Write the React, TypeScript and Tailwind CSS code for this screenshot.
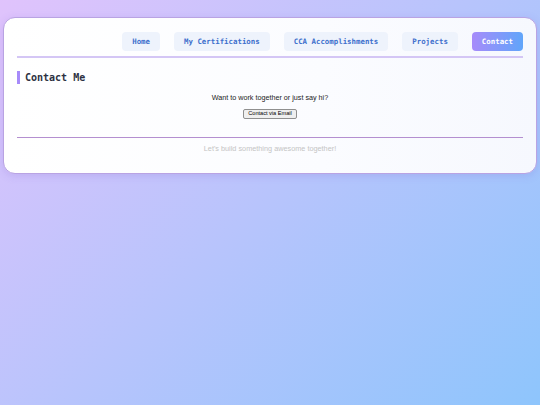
const links = ['Home', 'My Certifications', 'CCA Accomplishments', 'Projects', 'Contact'];

export default function App() {
    return (
        <div className="min-h-screen bg-[linear-gradient(135deg,#e0c3fc_0%,#8ec5fc_100%)] px-[3px] pt-[17px] font-['Liberation_Sans',Arial,sans-serif]">
            <div className="rounded-[12px] border-[1.5px] border-[#b9a3e3] bg-[linear-gradient(90deg,#ffffff_0%,#fbfcff_60%,#f6f8fe_100%)] px-[13px] pb-[19px] pt-[14px] shadow-[0_2px_8px_rgba(120,90,200,0.18)]">
                <nav className="flex justify-end gap-[14px] border-b-2 border-[#d4c6f5] pb-[5px]">
                    {links.map((link) => {
                        const active = link === 'Contact';

                        return (
                            <a
                                key={link}
                                className={
                                    active
                                        ? "flex h-[19px] items-center rounded-[4px] bg-[linear-gradient(90deg,#a78bfa,#60a5fa)] px-[10px] font-['DejaVu_Sans_Mono',monospace] text-[7.4px] font-bold text-white"
                                        : "flex h-[19px] items-center rounded-[4px] bg-[#eef3fc] px-[10px] font-['DejaVu_Sans_Mono',monospace] text-[7.4px] font-bold text-[#3d6fcc]"
                                }
                            >
                                {link}
                            </a>
                        );
                    })}
                </nav>

                <section className="pt-[13px]">
                    <h2 className="border-l-[3px] border-[#a78bfa] pl-[5px] font-['DejaVu_Sans_Mono',monospace] text-[10px] font-bold leading-[13px] text-[#2d3142]">
                        Contact Me
                    </h2>
                    <div className="flex flex-col items-center pt-[9px]">
                        <p className="text-[7.2px] leading-[10px] text-[#222]">
                            Want to work together or just say hi?
                        </p>
                        <button
                            type="button"
                            className="mt-[6px] rounded-[2px] border border-[#8f8f8f] bg-[#efefef] px-[4px] text-[5.6px] leading-[7.5px] text-black"
                        >
                            Contact via Email
                        </button>
                    </div>
                </section>

                <footer className="mt-[18px] border-t-[1.5px] border-[#b48fd0] pt-[6px] text-center text-[7.3px] leading-[10px] text-[#c4c4c4]">
                    Let's build something awesome together!
                </footer>
            </div>
        </div>
    );
}
